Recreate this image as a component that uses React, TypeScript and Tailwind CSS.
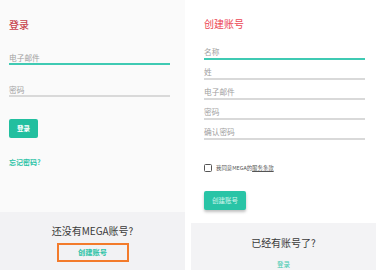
import React from "react";

const font = { fontFamily: '"Noto Sans CJK SC", "Noto Sans", sans-serif' };

function Field({ label, active }: { label: string; active?: boolean }) {
  return (
    <div
      className={`pb-[1px] border-b-2 ${active ? "border-[#3fcab3]" : "border-[#d9d9d9]"}`}
    >
      <div className="text-[7.7px] leading-[10px] text-[#a0a0a0]">{label}</div>
    </div>
  );
}

export default function App() {
  return (
    <div className="w-[376px] h-[270px] bg-white flex overflow-hidden" style={font}>
      {/* Left: login */}
      <div className="w-[185px] h-[270px] bg-[#fafafa] flex flex-col">
        <div className="pl-[9px] pr-[15px] flex flex-col">
          <div className="pt-[20px] text-[10px] leading-[10px] font-medium text-[#c8434d]">登录</div>
          <div className="mt-[23px] border-b-2 border-[#3fcab3]">
            <div className="text-[7.7px] leading-[10px] text-[#a0a0a0]">电子邮件</div>
          </div>
          <div className="mt-[20px] border-b-2 border-[#d9d9d9]">
            <div className="text-[7.7px] leading-[10px] text-[#a0a0a0]">密码</div>
          </div>
          <div className="mt-[22px] w-[29px] h-[19px] rounded-[2px] bg-[#22bf9f] flex items-center justify-center text-white text-[6.5px] font-bold">
            登录
          </div>
          <div className="mt-[20px] text-[7px] leading-[8px] font-bold text-[#2cc3a6]">忘记密码?</div>
        </div>
        <div className="mt-auto h-[58px] bg-[#f2f2f4] flex flex-col items-center pt-[13px]">
          <div className="text-[10px] leading-[12px] text-[#3a3a3a]">还没有MEGA账号?</div>
          <div className="mt-[6px] w-[72px] h-[19px] border-2 border-[#f37b2b] flex items-center justify-center text-[7.3px] font-bold text-[#2cc3a6]">
            创建账号
          </div>
        </div>
      </div>
      <div className="w-[6px]" />
      {/* Right: create account */}
      <div className="w-[185px] h-[270px] bg-white flex flex-col">
        <div className="pl-[13px] pr-[11px] flex flex-col">
          <div className="pt-[19px] text-[10px] leading-[10px] text-[#ec4654]">创建账号</div>
          <div className="mt-[18px] flex flex-col gap-[7px]">
            <Field label="名称" active />
            <Field label="姓" />
            <Field label="电子邮件" />
            <Field label="密码" />
            <Field label="确认密码" />
          </div>
          <div className="mt-[24px] h-[8px] flex items-center gap-[4px]">
            <div className="w-[8px] h-[8px] rounded-[1.5px] border-[1.5px] border-[#555]" />
            <div className="text-[5.4px] leading-[8px] text-[#555]">
              我同意MEGA的<span className="underline">服务条款</span>
            </div>
          </div>
          <div className="mt-[19px] w-[42px] h-[19px] rounded-[2px] bg-[#29c4a6] shadow-[0_2px_3px_rgba(0,0,0,0.25)] flex items-center justify-center text-[6.5px] text-[#d6f5ee]">
            创建账号
          </div>
        </div>
        <div className="mt-auto h-[47px] bg-[#f3f3f5] flex flex-col items-center pt-[14px]">
          <div className="text-[10px] leading-[12px] text-[#3a3a3a]">已经有账号了?</div>
          <div className="mt-[11px] text-[6.5px] leading-[8px] text-[#3cc9ae]">登录</div>
        </div>
      </div>
    </div>
  );
}
